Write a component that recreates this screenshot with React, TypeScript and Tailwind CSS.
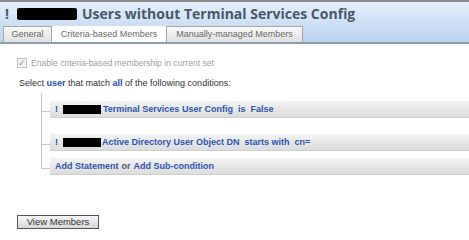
export default function App() {
  return (
    <div className="w-[469px] h-[240px] bg-white overflow-hidden relative font-['Liberation_Sans',Arial,sans-serif]">
      <div className="border-t-2 border-[#8c8c8c] bg-gradient-to-b from-[#e4f0fe] to-[#bad2ef] border-b-2 border-b-[#8e9eb0]">
        <div className="h-[24px] flex items-center pl-[5px] text-[14px] font-bold text-[#4a5868] leading-none font-['Open_Sans',sans-serif]">
          <span>!</span>
          <span className="inline-block w-[60px] h-[12px] bg-black rounded-[2px] ml-[8px] mr-[5px]" />
          <span>Users without Terminal Services Config</span>
        </div>
        <div className="flex pl-[3px] h-[16px] items-end text-[9px] leading-none text-[#6a6a6a]">
          <div className="h-[16px] w-[49px] flex items-center justify-center bg-gradient-to-b from-[#fafafa] to-[#e0e0e0] border border-b-0 border-[#a8a8a8]">General</div>
          <div className="h-[16px] w-[114px] flex items-center justify-center bg-white">Criteria-based Members</div>
          <div className="h-[16px] w-[137px] flex items-center justify-center bg-gradient-to-b from-[#fafafa] to-[#e0e0e0] border border-b-0 border-[#a8a8a8]">Manually-managed Members</div>
        </div>
      </div>

      <div className="flex items-center mt-[14px] ml-[17px] text-[8.6px] text-[#a0a0a0] leading-none">
        <span className="w-[10px] h-[10px] border border-[#c0c0c0] bg-[#f4f4f4] flex items-center justify-center text-[9px] text-[#909090]">✓</span>
        <span className="ml-[4px]">Enable criteria-based membership in current set</span>
      </div>

      <div className="mt-[11px] ml-[19px] text-[9px] text-[#333] leading-none">
        Select <span className="font-bold text-[#2a50b0]">user</span> that match <span className="font-bold text-[#2a50b0]">all</span> of the following conditions:
      </div>

      <div className="flex ml-[41px] mt-[5px]">
        <div className="flex flex-col w-full">
          <Row top={8}>
            <span>!</span>
            <span className="inline-block w-[38px] h-[9px] bg-black ml-[5px] mr-[2px]" />
            <span>Terminal Services User Config</span>
            <span className="ml-[5px]">is</span>
            <span className="ml-[5px]">False</span>
          </Row>
          <Row top={16}>
            <span>!</span>
            <span className="inline-block w-[38px] h-[9px] bg-black ml-[5px] mr-[1px]" />
            <span>Active Directory User Object DN</span>
            <span className="ml-[5px]">starts with</span>
            <span className="ml-[5px]">cn=</span>
          </Row>
          <Row top={7} last>
            <span>Add Statement</span>
            <span className="mx-[3px] text-[#505a68]">or</span>
            <span>Add Sub-condition</span>
          </Row>
        </div>
      </div>

      <div className="mt-[40px] ml-[17px] w-[82px] h-[14px] border border-[#555] bg-gradient-to-b from-[#f6f6f6] to-[#d8d8d8] flex items-center justify-center text-[9.5px] text-[#333] leading-none">
        View Members
      </div>
    </div>
  );
}

function Row({ top, last, children }: { top: number; last?: boolean; children: React.ReactNode }) {
  return (
    <div className={`flex ${last ? "items-start" : ""}`}>
      <div className="w-[9px] border-l border-[#c8c8c8] flex flex-col" style={{ paddingTop: top }}>
        <div className="h-[11px] border-b border-[#c8c8c8]" />
      </div>
      <div className="flex-1 flex flex-col" style={{ paddingTop: top }}>
        <div className="h-[17px] flex items-center pl-[5px] bg-gradient-to-b from-[#f3f3f3] to-[#dcdcdc] border-b border-[#cfcfcf] text-[9px] font-bold text-[#2c55b2] leading-none whitespace-nowrap">
          {children}
        </div>
      </div>
    </div>
  );
}
